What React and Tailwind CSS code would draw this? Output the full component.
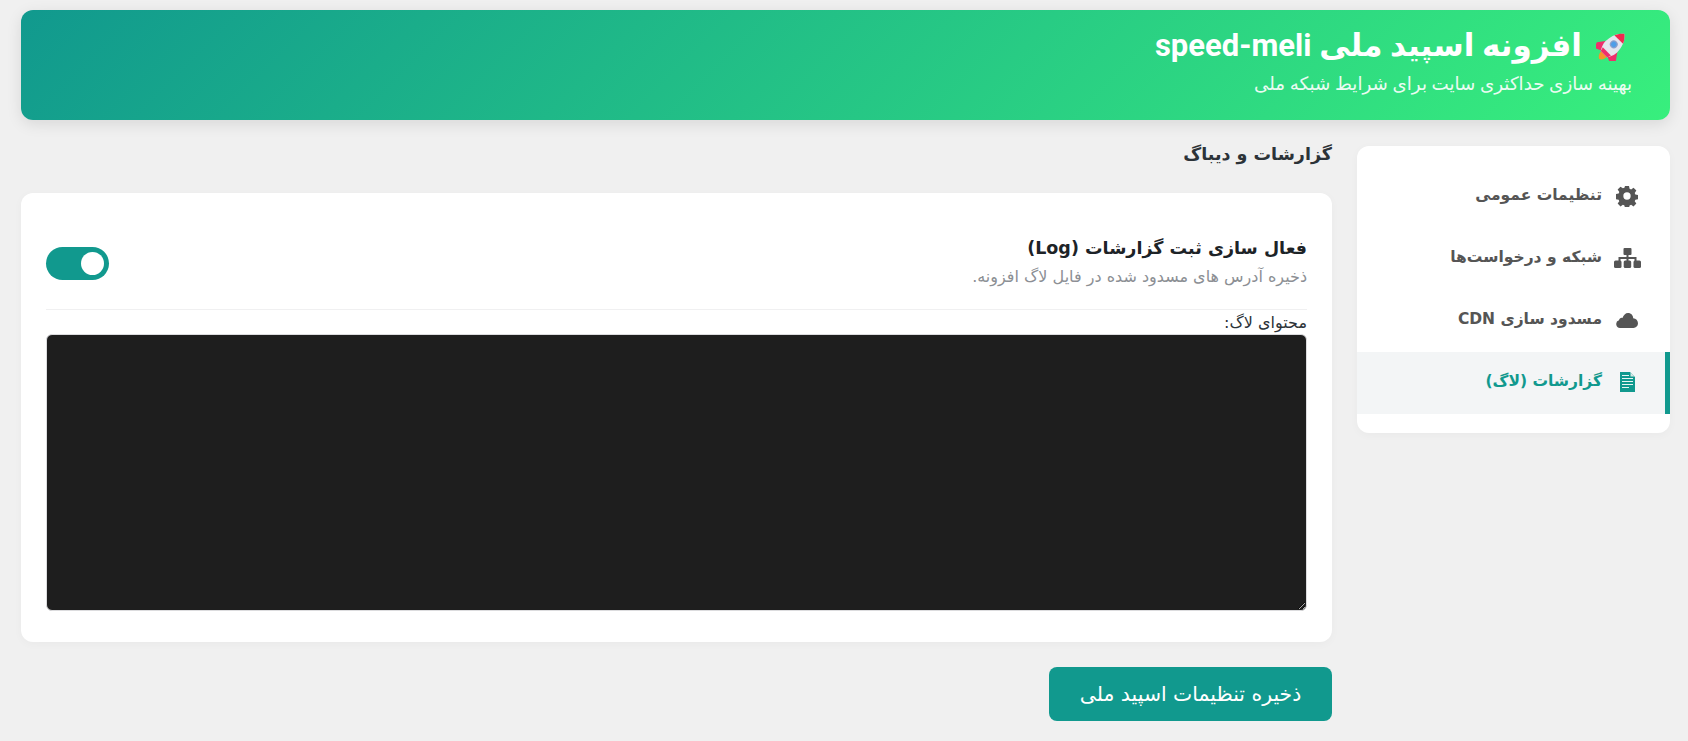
const GearIcon = ({ className }) => (
    <svg className={className} viewBox="0 0 24 24" fill="currentColor">
        <path
            fillRule="evenodd"
            d="M9.800 1h4.400l.6 3.100 1.700.7 2.600-1.800 3.100 3.100-1.800 2.600.7 1.700 3.100.6v4.400l-3.100.6-.7 1.700 1.800 2.600-3.100 3.100-2.600-1.800-1.700.7-.6 3.100H9.800l-.6-3.100-1.700-.7-2.600 1.800-3.100-3.100 1.800-2.600-.7-1.700-3.100-.6V9.800l3.100-.6.7-1.700-1.800-2.600 3.100-3.100 2.600 1.800 1.700-.7zM12 8a4 4 0 1 0 0 8 4 4 0 0 0 0-8z"
        />
    </svg>
);

const NetworkIcon = ({ className }) => (
    <svg className={className} viewBox="0 0 27 20" fill="currentColor">
        <rect x="9.500" y="0" width="8" height="7" rx="1" />
        <path d="M12.500 6h2v3h8v4h-2v-2h-6v2h-2v-2h-6v2h-2V9h8z" />
        <rect x="0" y="12.500" width="7.500" height="7.500" rx="1.500" />
        <rect x="9.700" y="12.500" width="7.500" height="7.500" rx="1.500" />
        <rect x="19.500" y="12.500" width="7.500" height="7.500" rx="1.500" />
    </svg>
);

const CloudIcon = ({ className }) => (
    <svg className={className} viewBox="0 0 22 15" fill="currentColor">
        <path d="M4 15a4 4 0 0 1-1-7.800C3.300 5.500 5 4.500 6.500 5 7.500 2 9.500 0 12 0c3.200 0 5.200 2.500 5.200 5.300C20 5.500 22 7.700 22 10.300 22 13 20 15 17.500 15z" />
    </svg>
);

const DocIcon = ({ className }) => (
    <svg className={className} viewBox="0 0 15 20">
        <path d="M0 0h10l5 5v15H0z" fill="currentColor" />
        <path d="M10.500 .5l4 4h-4z" fill="#d7e8e6" />
        <path d="M2 3.500h7M2 6.500h11M2 9.500h11M2 12.500h11M2 15.500h7" stroke="#eaf5f4" strokeWidth="1.100" />
    </svg>
);

const navItems = [
    { label: 'تنظیمات عمومی', icon: GearIcon, size: 'w-[22px] h-[22px]' },
    { label: 'شبکه و درخواست‌ها', icon: NetworkIcon, size: 'w-[27px] h-[20px]' },
    { label: 'مسدود سازی CDN', icon: CloudIcon, size: 'w-[22px] h-[15px]' },
    { label: 'گزارشات (لاگ)', icon: DocIcon, size: 'w-[15px] h-[20px]', active: true },
];

function Rocket() {
    return (
        <svg className="w-[30px] h-[30px] shrink-0 mr-[6px]" viewBox="2 3 26 26">
            <g transform="rotate(45 16 16)">
                <path d="M12.500 26h7c0 3-1.500 5-3.500 6-2-1-3.500-3-3.500-6z" fill="#f6962c" />
                <path d="M9.500 16L4.500 23l1 5.500L12 25.500z" fill="#ee2f6c" />
                <path d="M22.500 16l5 7-1 5.500-6.500-3z" fill="#ee2f6c" />
                <path d="M16 1c5 4 7 10 7 16 0 4-2 7-3 9h-8c-1-2-3-5-3-9 0-6 2-12 7-16z" fill="#e4e6ee" />
                <path d="M16 1c2.500 2 4.200 4.500 5.300 7H10.700c1.100-2.500 2.800-5 5.300-7z" fill="#f1294f" />
                <path d="M11 22.500h10L20 26h-8z" fill="#ee2f6c" />
                <circle cx="16" cy="14" r="3.400" fill="#8aa0cc" />
                <circle cx="16" cy="14" r="2.300" fill="#4f9ee8" />
            </g>
        </svg>
    );
}

export default function App() {
    return (
        <div
            dir="rtl"
            className="min-h-[741px] bg-[#f0f0f0] pt-[10px] pl-[21px] pr-[18px] font-['Roboto','DejaVu_Sans',sans-serif]"
        >
            {/* Hero */}
            <div className="h-[110px] rounded-[12px] bg-[linear-gradient(135deg,#11998e,#38ef7d)] pt-[18px] pr-[38px] text-white shadow-[0_4px_15px_rgba(0,0,0,0.1)]">
                <div className="flex items-center gap-[14px] h-[36px]">
                    <Rocket />
                    <h1 className="text-[31px] leading-[36px] font-bold">افزونه اسپید ملی speed-meli</h1>
                </div>
                <p className="mt-[8px] text-[18.300px] leading-[24px] opacity-90">بهینه سازی حداکثری سایت برای شرایط شبکه ملی</p>
            </div>

            <div className="mt-[26px] flex gap-[25px] items-start">
                {/* Sidebar */}
                <nav className="w-[313px] shrink-0 rounded-[12px] bg-white pt-[20px] pb-[19px] shadow-[0_2px_10px_rgba(0,0,0,0.03)]">
                    {navItems.map(({ label, icon: Icon, size, active }) => (
                        <div
                            key={label}
                            className={`h-[62px] pb-[2px] flex items-center gap-[14px] text-[15.500px] font-bold font-['DejaVu_Sans',sans-serif] ${active ? 'bg-[#f3f5f6] border-r-[5px] border-[#11998e] pr-[27px] text-[#11998e]' : 'pr-[32px] text-[#555555]'}`}
                        >
                            <span className="w-[22px] flex justify-center">
                                <Icon className={`${size} shrink-0`} />
                            </span>
                            <span>{label}</span>
                        </div>
                    ))}
                </nav>

                {/* Main column */}
                <main className="flex-1 min-w-0 font-['DejaVu_Sans',sans-serif]">
                    <h2 className="h-[22px] text-[17.500px] leading-[16px] font-bold text-[#2c3338]">گزارشات و دیباگ</h2>

                    <section className="mt-[25px] h-[449px] rounded-[12px] bg-white px-[25px] pt-[40px] shadow-[0_2px_10px_rgba(0,0,0,0.03)]">
                        <div className="h-[77px] flex items-start justify-between border-b border-[#f0f0f1]">
                            <div>
                                <h3 className="text-[17.500px] leading-[30px] font-bold text-[#1d2327]">فعال سازی ثبت گزارشات (Log)</h3>
                                <p className="mt-[2px] text-[16px] leading-[24px] text-[#8c8f94]">ذخیره آدرس های مسدود شده در فایل لاگ افزونه.</p>
                            </div>
                            <div className="mt-[14px] w-[63px] h-[33px] rounded-full bg-[#11998e] flex items-center pr-[5px]">
                                <div className="w-[23px] h-[23px] rounded-full bg-white" />
                            </div>
                        </div>
                        <label className="block mt-[2px] text-[16px] leading-[22px] text-[#2c3338]">محتوای لاگ:</label>
                        <textarea
                            readOnly
                            dir="ltr"
                            className="block w-full h-[277px] rounded-[6px] border border-[#dcdcde] bg-[#1e1e1e] text-[#f0f0f1]"
                        />
                    </section>

                    <div className="mt-[25px] flex justify-start">
                        <button
                            type="button"
                            className="w-[283px] h-[54px] rounded-[8px] bg-[#11998e] text-[20.400px] text-white"
                        >
                            ذخیره تنظیمات اسپید ملی
                        </button>
                    </div>
                </main>
            </div>
        </div>
    );
}
